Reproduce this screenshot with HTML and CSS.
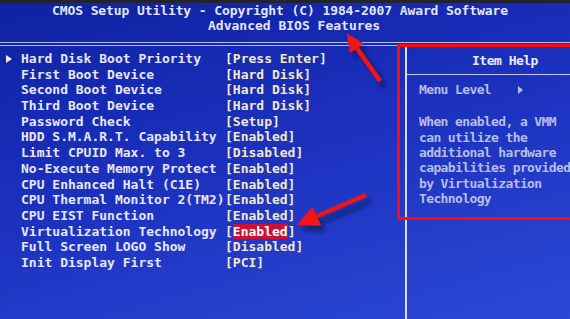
FILE: index.html
```html
<!DOCTYPE html>
<html lang="en">
<head>
<meta charset="UTF-8" />
<meta name="viewport" content="width=device-width, initial-scale=1.0" />
<title>Advanced BIOS Features</title>
<link rel="stylesheet" href="styles.css">
</head>
<body>
<div id="screen">
  <div class="bezel"></div>
  <div id="header">
    <div class="title-main">CMOS Setup Utility - Copyright (C) 1984-2007 Award Software</div>
    <div class="title-sub">Advanced BIOS Features</div>
  </div>
  <div class="rule"></div>
  <div id="main">
    <ul id="menu">
      <li class="row"><span class="mark"><i class="arrow"></i></span><span class="label">Hard Disk Boot Priority</span><span class="value">[Press Enter]</span></li>
      <li class="row"><span class="mark"></span><span class="label">First Boot Device</span><span class="value">[Hard Disk]</span></li>
      <li class="row"><span class="mark"></span><span class="label">Second Boot Device</span><span class="value">[Hard Disk]</span></li>
      <li class="row"><span class="mark"></span><span class="label">Third Boot Device</span><span class="value">[Hard Disk]</span></li>
      <li class="row"><span class="mark"></span><span class="label">Password Check</span><span class="value">[Setup]</span></li>
      <li class="row"><span class="mark"></span><span class="label">HDD S.M.A.R.T. Capability</span><span class="value">[Enabled]</span></li>
      <li class="row"><span class="mark"></span><span class="label">Limit CPUID Max. to 3</span><span class="value">[Disabled]</span></li>
      <li class="row"><span class="mark"></span><span class="label">No-Execute Memory Protect</span><span class="value">[Enabled]</span></li>
      <li class="row"><span class="mark"></span><span class="label">CPU Enhanced Halt (C1E)</span><span class="value">[Enabled]</span></li>
      <li class="row"><span class="mark"></span><span class="label">CPU Thermal Monitor 2(TM2)</span><span class="value">[Enabled]</span></li>
      <li class="row"><span class="mark"></span><span class="label">CPU EIST Function</span><span class="value">[Enabled]</span></li>
      <li class="row"><span class="mark"></span><span class="label">Virtualization Technology</span><span class="value">[<span class="sel">Enabled</span>]</span></li>
      <li class="row"><span class="mark"></span><span class="label">Full Screen LOGO Show</span><span class="value">[Disabled]</span></li>
      <li class="row"><span class="mark"></span><span class="label">Init Display First</span><span class="value">[PCI]</span></li>
    </ul>
    <div id="help">
      <div class="help-head">Item Help</div>
      <div class="help-body">
        <div class="level">Menu Level<i class="arrow small"></i></div>
        <div class="help-text">
          <div>When enabled, a VMM</div>
          <div>can utilize the</div>
          <div>additional hardware</div>
          <div>capabilities provided</div>
          <div>by Virtualization</div>
          <div>Technology</div>
        </div>
      </div>
    </div>
  </div>

  <!-- annotations drawn over the photo -->
  <div class="callout"></div>
  <svg class="marks" width="570" height="319" viewBox="0 0 570 319">
    <defs>
      <filter id="shade" x="-50%" y="-50%" width="200%" height="200%">
        <feDropShadow dx="5" dy="6" stdDeviation="2" flood-color="#000a3a" flood-opacity="0.55" />
      </filter>
    </defs>
    <g filter="url(#shade)" fill="#f01212" stroke="#f01212">
      <line x1="380" y1="81" x2="356" y2="47" stroke-width="4.5" />
      <polygon points="346.7,33 363.6,43.5 350,53" stroke="none" />
      <line x1="366" y1="195" x2="316" y2="216.5" stroke-width="4.5" />
      <polygon points="296.7,225 321,225.8 312.6,206.8" stroke="none" />
    </g>
  </svg>
</div>
</body>
</html>
```

FILE: styles.css
```css
html, body {
  margin: 0;
  padding: 0;
}
body {
  width: 570px;
  height: 319px;
  overflow: hidden;
  font-family: "DejaVu Sans Mono", "Liberation Mono", monospace;
  font-weight: bold;
  font-size: 13px;
}
#screen {
  position: relative;
  width: 570px;
  height: 319px;
  overflow: hidden;
  background: linear-gradient(165deg, #0f22a0 0%, #1529b2 25%, #1e34c2 55%, #2640cc 80%, #2c48d6 100%);
  color: #e6e8fa;
}
.bezel {
  height: 3px;
  background: #22232e;
}
#header {
  padding-top: 1px;
  line-height: 14.5px;
  color: #e2e6fb;
  white-space: nowrap;
}
.title-main {
  padding-left: 52px;
  letter-spacing: -0.1px;
}
.title-sub {
  padding-left: 208px;
}
.rule {
  margin-top: 9px;
  height: 2px;
  border-top: 1px solid #b4bcee;
  border-bottom: 1px solid #b4bcee;
}
#main {
  display: grid;
  grid-template-columns: 405px 1fr;
  height: 274px;
}
#menu {
  list-style: none;
  margin: 0;
  padding: 5px 0 0 0;
}
.row {
  display: grid;
  grid-template-columns: 21px 204px auto;
  height: 15.7px;
  line-height: 15.7px;
  white-space: nowrap;
}
.mark {
  display: flex;
  align-items: center;
  padding-left: 6px;
}
.arrow {
  display: inline-block;
  width: 0;
  height: 0;
  border-left: 6px solid #eef0ff;
  border-top: 4px solid transparent;
  border-bottom: 4px solid transparent;
}
.value {
  color: #f2e9c8;
}
.sel {
  display: inline-block;
  background: #cc1232;
  color: #ffffff;
  line-height: 15px;
}
#help {
  border-left: 2px solid #d8dcf8;
}
.help-head {
  padding: 6.5px 0 6.5px 65px;
  line-height: 15px;
  letter-spacing: -0.5px;
  color: #e8ecff;
  border-bottom: 1px solid #c4cbf0;
}
.help-body {
  padding: 7.4px 0 0 12px;
  color: #b6bee9;
  line-height: 15.3px;
  letter-spacing: -0.62px;
  white-space: nowrap;
}
.level {
  display: flex;
  align-items: center;
  margin-bottom: 16.7px;
}
.arrow.small {
  margin-left: 27px;
  border-left: 5px solid #b6bee9;
  border-top: 4px solid transparent;
  border-bottom: 4px solid transparent;
}
.callout {
  position: absolute;
  left: 397px;
  top: 44px;
  width: 180px;
  height: 170px;
  border: 3px solid #ff0a0a;
}
.marks {
  position: absolute;
  left: 0;
  top: 0;
  pointer-events: none;
}
```
